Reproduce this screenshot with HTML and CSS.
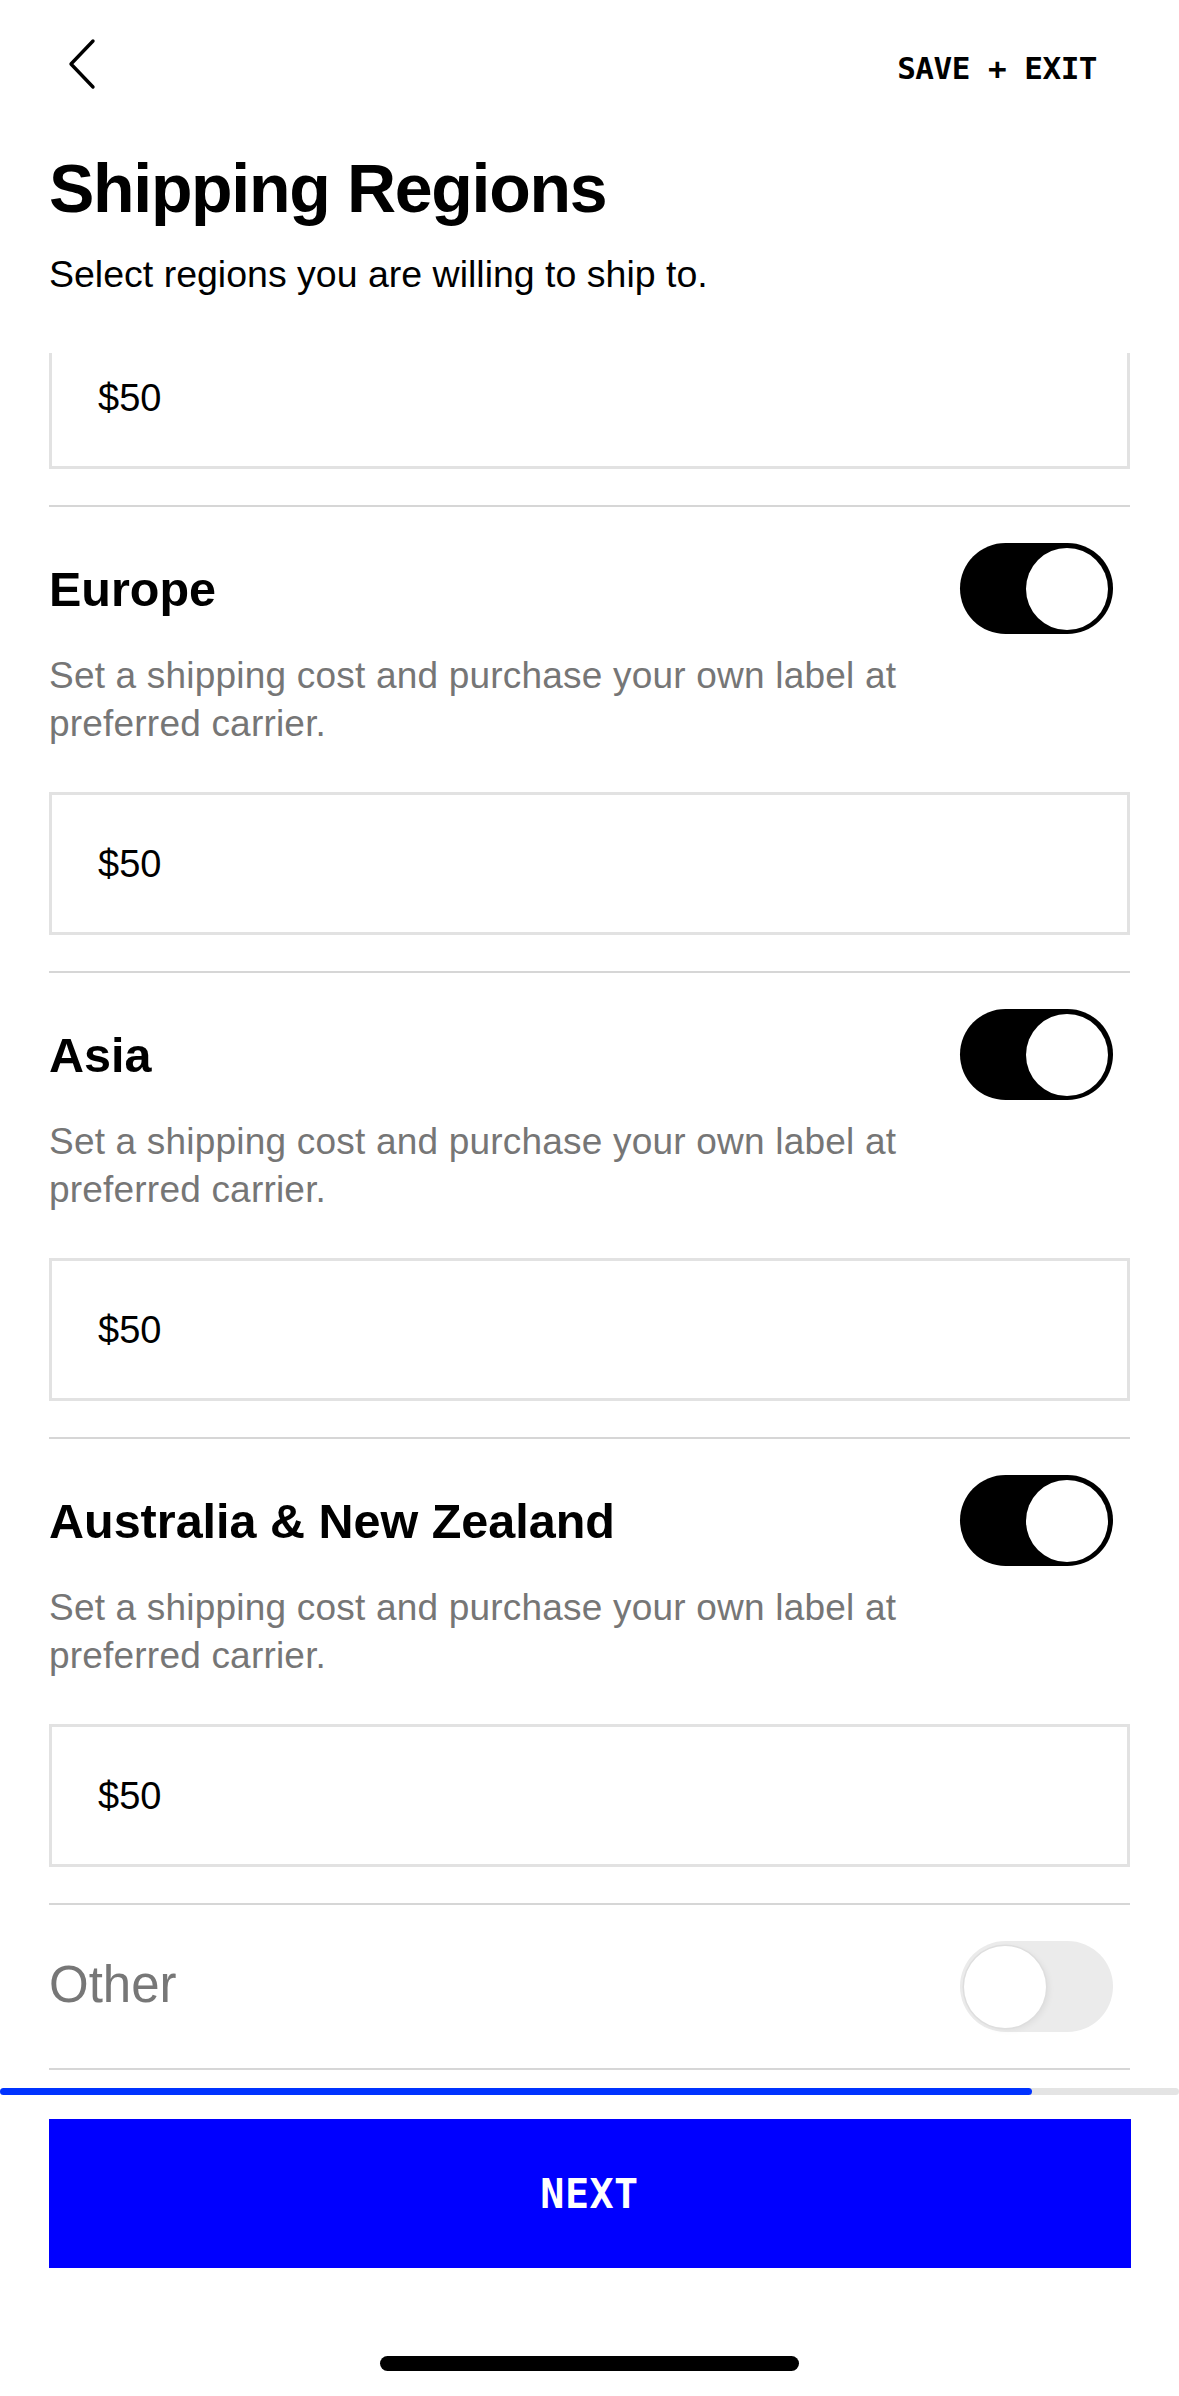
FILE: index.html
```html
<!DOCTYPE html>
<html lang="en">
<head>
<meta charset="utf-8">
<title>Shipping Regions</title>
<link rel="stylesheet" href="styles.css">
</head>
<body>
<div class="screen">
  <header class="topbar">
    <button class="back" aria-label="Back">
      <svg width="30" height="52" viewBox="0 0 30 52"><polyline points="26,3 4,26 26,49" fill="none" stroke="#000" stroke-width="3.4" stroke-linecap="round" stroke-linejoin="round"/></svg>
    </button>
    <span class="save-exit">SAVE + EXIT</span>
  </header>

  <div class="intro">
    <h1 class="title">Shipping Regions</h1>
    <p class="subtitle">Select regions you are willing to ship to.</p>
  </div>

  <main class="scroller">
    <div class="scroll-content">
      <div class="price-box first">$50</div>

      <section class="region">
        <div class="region-head">
          <h2 class="region-name">Europe</h2>
          <span class="toggle on"><span class="knob"></span></span>
        </div>
        <p class="region-desc">Set a shipping cost and purchase your own label at preferred carrier.</p>
        <div class="price-box">$50</div>
      </section>

      <section class="region">
        <div class="region-head">
          <h2 class="region-name">Asia</h2>
          <span class="toggle on"><span class="knob"></span></span>
        </div>
        <p class="region-desc">Set a shipping cost and purchase your own label at preferred carrier.</p>
        <div class="price-box">$50</div>
      </section>

      <section class="region">
        <div class="region-head">
          <h2 class="region-name">Australia &amp; New Zealand</h2>
          <span class="toggle on"><span class="knob"></span></span>
        </div>
        <p class="region-desc">Set a shipping cost and purchase your own label at preferred carrier.</p>
        <div class="price-box">$50</div>
      </section>

      <section class="region region-off">
        <div class="region-head">
          <h2 class="region-name muted">Other</h2>
          <span class="toggle off"><span class="knob"></span></span>
        </div>
      </section>
      <div class="divider"></div>
    </div>
  </main>

  <footer class="footer">
    <div class="progress"><div class="progress-fill" style="width: 1032px"></div></div>
    <button class="next">NEXT</button>
    <div class="home-indicator"></div>
  </footer>
</div>
</body>
</html>
```

FILE: styles.css
```css
* { box-sizing: border-box; }

html, body {
  margin: 0;
  padding: 0;
  background: #fff;
}

body {
  font-family: "Liberation Sans", Arial, Helvetica, sans-serif;
  color: #000;
}

.screen {
  width: 1179px;
  height: 2396px;
  display: flex;
  flex-direction: column;
  overflow: hidden;
}

.topbar {
  display: flex;
  align-items: center;
  justify-content: space-between;
  padding: 38px 82px 0 67px;
  height: 90px;
}

.back {
  border: 0;
  background: none;
  padding: 0;
  width: 30px;
  height: 52px;
  display: block;
}
.back svg { display: block; }

.save-exit {
  font-family: "DejaVu Sans Mono", "Liberation Mono", monospace;
  font-size: 31px;
  font-weight: 700;
  line-height: 1;
  letter-spacing: -0.5px;
  margin-top: 8px;
}

.intro {
  padding: 0 49px;
}

.title {
  margin: 64px 0 0;
  font-size: 68px;
  line-height: 68px;
  font-weight: 700;
  letter-spacing: -1.3px;
}

.subtitle {
  margin: 34px 0 0;
  font-size: 37.5px;
  line-height: 37px;
}

.scroller {
  margin-top: 60px;
  height: 1735px;
  overflow: hidden;
  flex: none;
}

.scroll-content {
  padding: 0 49px;
}

.price-box {
  height: 143px;
  border: 3px solid #e2e2e2;
  display: flex;
  align-items: center;
  padding-left: 46px;
  font-size: 38px;
  line-height: 1;
}

.price-box.first {
  margin-top: -27px;
}

.region {
  margin-top: 36px;
  border-top: 2px solid #d6d6d6;
  padding-top: 36px;
}

.region-head {
  display: flex;
  align-items: center;
  justify-content: space-between;
  height: 91px;
}

.region-name {
  margin: 0;
  font-size: 48.5px;
  line-height: 48px;
  font-weight: 700;
}

.region-name.muted {
  font-weight: 400;
  font-size: 51px;
  color: #777;
  margin-top: -4px;
}

.toggle {
  width: 153px;
  height: 91px;
  border-radius: 46px;
  margin-right: 17px;
  display: flex;
  align-items: center;
  padding: 0 5px;
  flex: none;
}

.toggle .knob {
  width: 82px;
  height: 82px;
  border-radius: 50%;
  background: #fff;
}

.toggle.on {
  background: #000;
  justify-content: flex-end;
}

.toggle.off {
  background: #ebebeb;
  justify-content: flex-start;
  padding-left: 4px;
}

.toggle.off .knob {
  box-shadow: 0 0 0 1.5px #dedede, 3px 2px 6px rgba(0,0,0,0.06);
}

.region-desc {
  margin: 18px 0 44px;
  max-width: 900px;
  font-size: 37px;
  line-height: 48px;
  letter-spacing: 0.2px;
  color: #767676;
}

.region-off {
  padding-bottom: 36px;
}

.divider {
  height: 2px;
  background: #d6d6d6;
}

.footer {
  flex: none;
  display: flex;
  flex-direction: column;
  align-items: center;
}

.progress {
  width: 1179px;
  height: 7px;
  background: #e4e4e4;
  border-radius: 4px;
}

.progress-fill {
  height: 7px;
  background: #0033ff;
  border-radius: 4px;
}

.next {
  margin-top: 24px;
  width: 1082px;
  height: 149px;
  border: 0;
  background: #0000ff;
  color: #fff;
  font-family: "DejaVu Sans Mono", "Liberation Mono", monospace;
  font-weight: 700;
  font-size: 40px;
  letter-spacing: 0.5px;
  padding: 0;
}

.home-indicator {
  margin-top: 88px;
  width: 419px;
  height: 15px;
  border-radius: 8px;
  background: #000;
}
```
